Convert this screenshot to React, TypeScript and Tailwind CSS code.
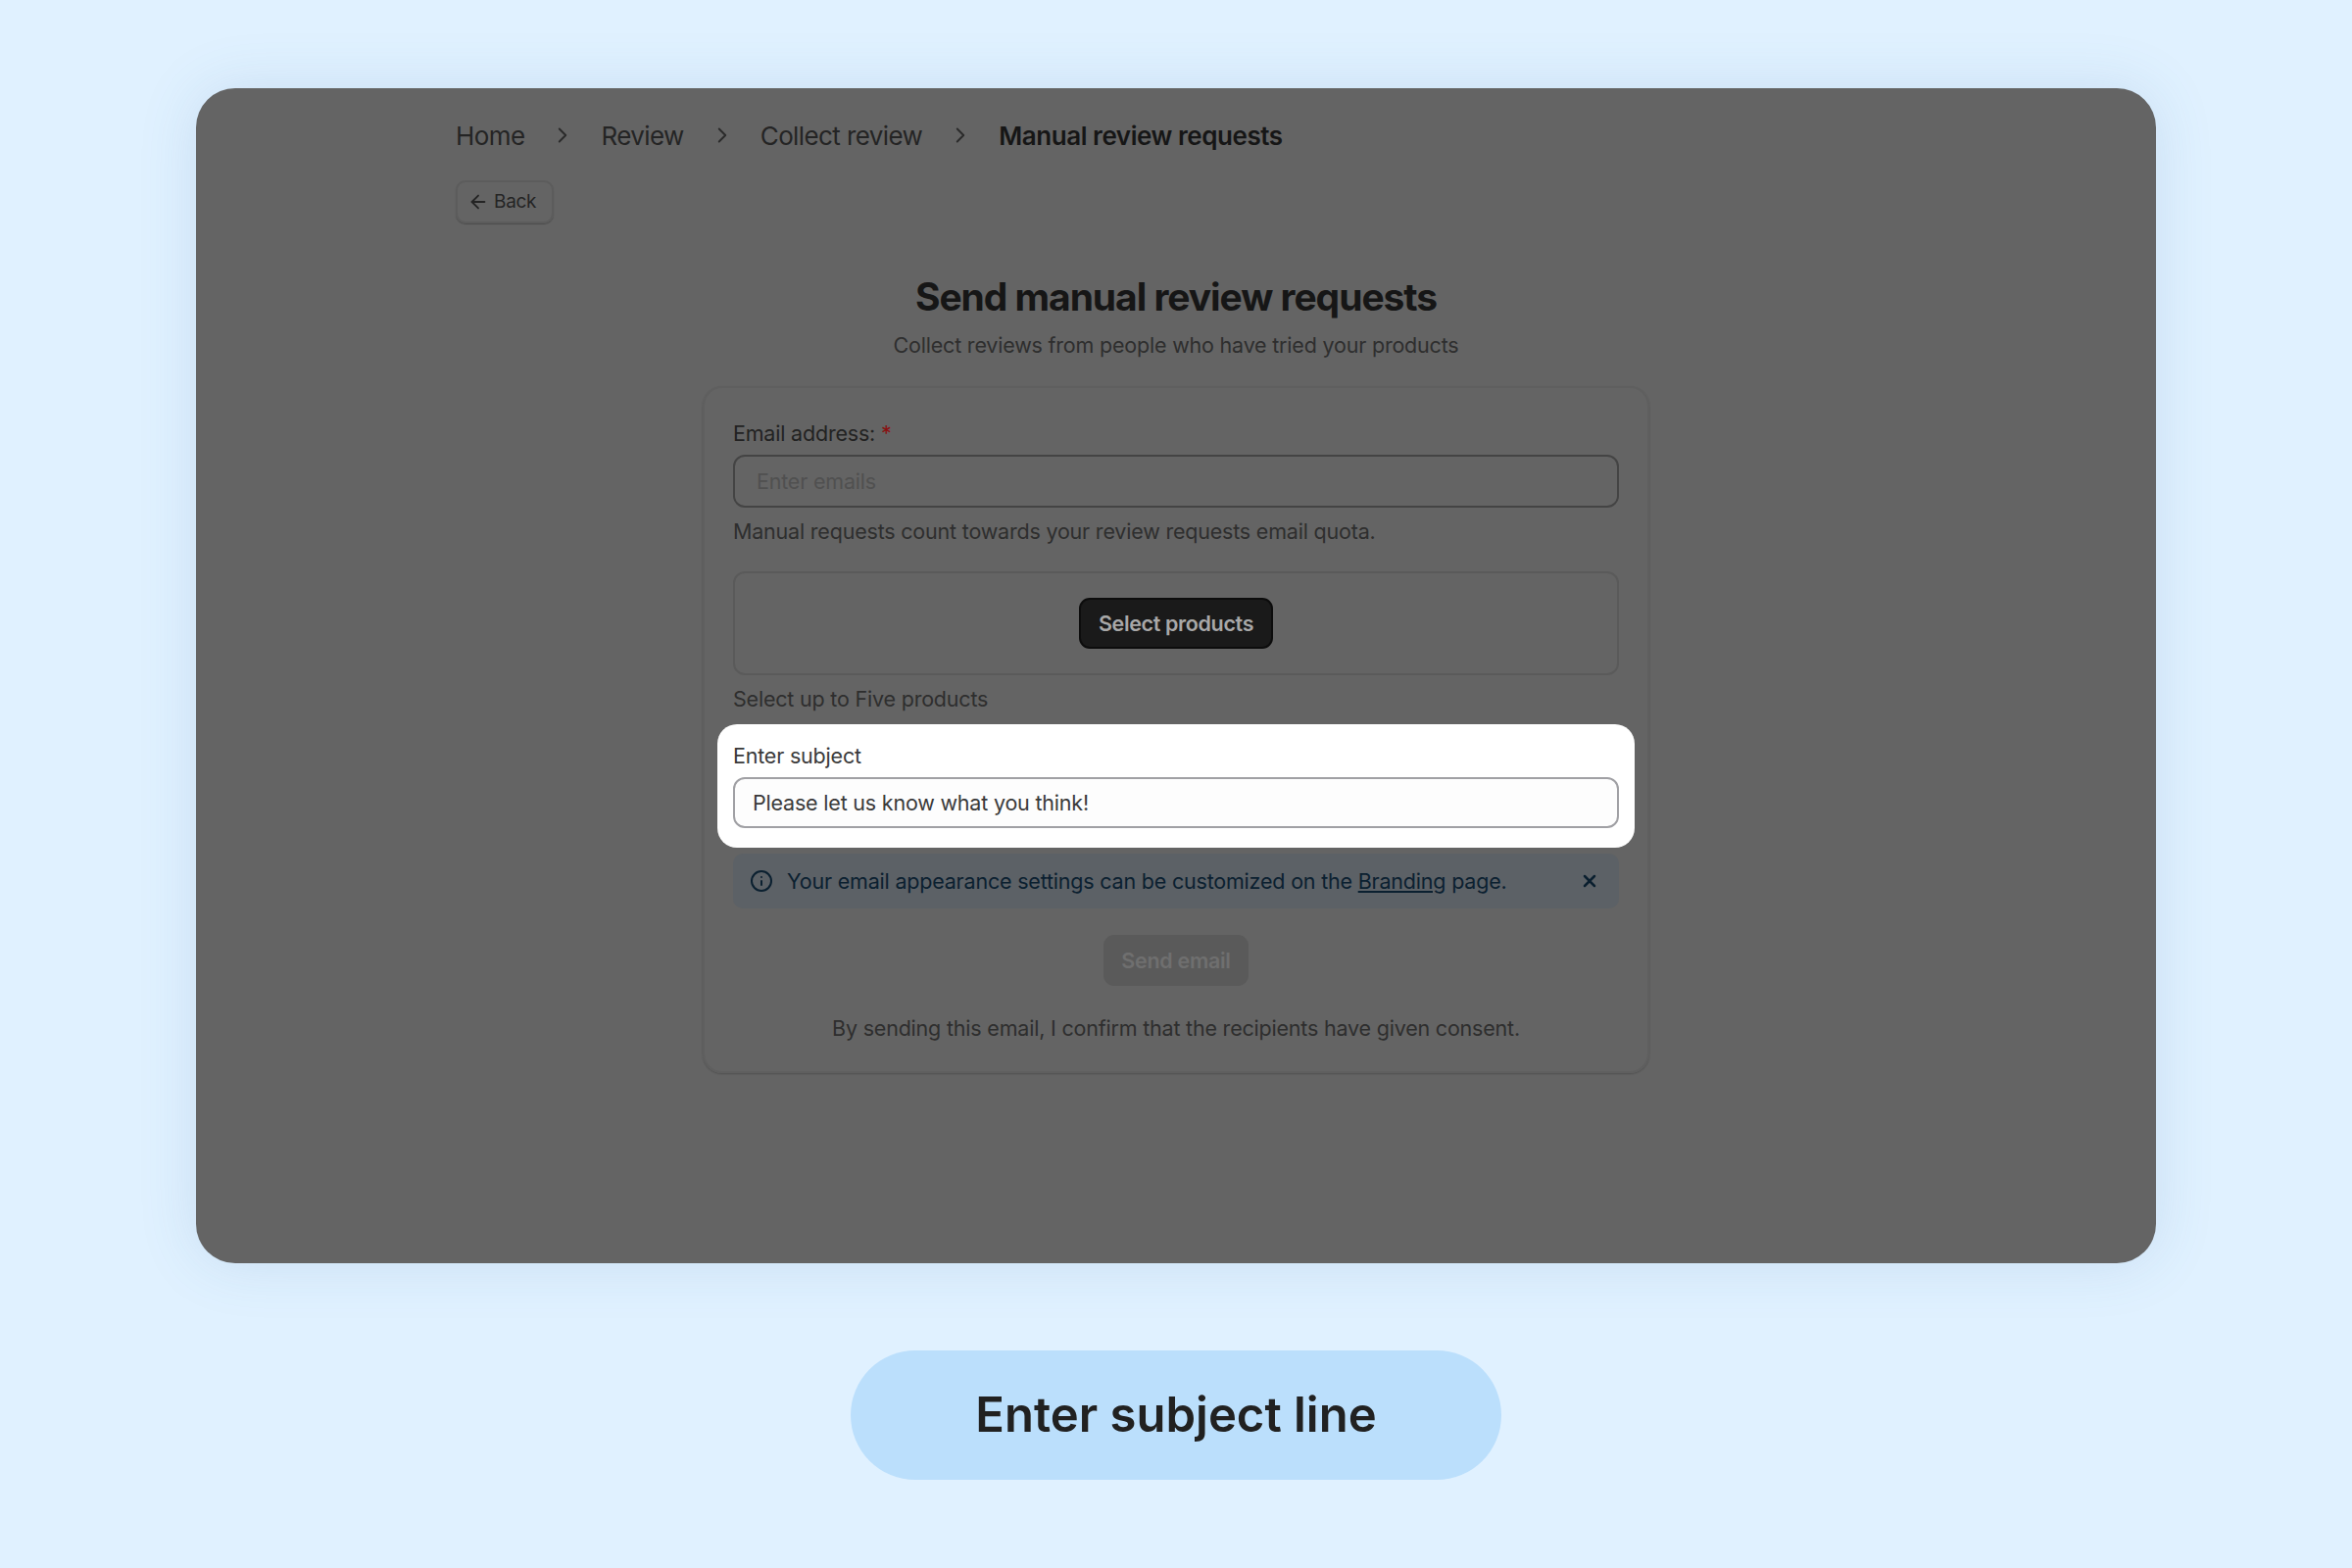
import { ArrowLeft, ChevronRight, Info, X } from 'lucide-react';

const crumbs = ['Home', 'Review', 'Collect review'];

function Breadcrumbs() {
  return (
    <div className="flex items-center h-[32px] text-[26px] tracking-[-0.6px] text-[#242424]">
      {crumbs.map((c) => (
        <div key={c} className="flex items-center">
          <span>{c}</span>
          <ChevronRight className="mx-[26px] w-[26px] h-[26px] text-[#2a2a2a]" strokeWidth={1.75} />
        </div>
      ))}
      <span className="font-semibold tracking-[-0.45px] text-[#161616]">Manual review requests</span>
    </div>
  );
}

function Card() {
  return (
    <div className="mx-auto mt-[29px] w-[966px] h-[701px] rounded-[20px] border-2 border-[#5f5f5f] px-[29px] pt-[33px] text-[21.5px] tracking-[-0.2px] text-[#2e2e2e] shadow-[0_1px_2px_rgba(0,0,0,0.2)]">
      <div className="h-[26px] leading-[26px] text-[#222]">
        Email address: <span className="text-[#8a1010]">*</span>
      </div>
      <div className="mt-[9px] h-[54px] rounded-[12px] border-2 border-[#444] pl-[22px] flex items-center text-[#505050]">
        Enter emails
      </div>
      <div className="mt-[11px] h-[26px] leading-[26px]">
        Manual requests count towards your review requests email quota.
      </div>
      <div className="mt-[28px] h-[106px] rounded-[12px] border-2 border-[#5a5a5a] flex items-center justify-center">
        <button className="h-[52px] w-[198px] rounded-[11px] bg-[#1a1a1a] border-2 border-[#0c0c0c] text-[#a8a8a8] font-semibold text-[21.5px] tracking-[-0.35px]">
          Select products
        </button>
      </div>
      <div className="mt-[11px] h-[26px] leading-[26px]">Select up to Five products</div>
      <div className="mt-[13px] -mx-[16px] h-[126px] rounded-[20px] bg-white px-[16px] pt-[19px]">
        <div className="h-[26px] leading-[26px] text-[#3a3a3a]">Enter subject</div>
        <div className="mt-[9px] h-[52px] rounded-[12px] border-2 border-[#a0a0a4] bg-[#fdfdfd] pl-[18px] flex items-center text-[#3a3a3a]">
          Please let us know what you think!
        </div>
      </div>
      <div className="mt-[6px] h-[56px] rounded-[10px] bg-[#5c6166] flex items-center pl-[17px] pr-[20px] text-[#0b2030]">
        <Info className="w-[24px] h-[24px] shrink-0" strokeWidth={2} />
        <span className="ml-[14px]">
          Your email appearance settings can be customized on the <span className="underline">Branding</span> page.
        </span>
        <X className="ml-auto w-[20px] h-[20px] shrink-0" strokeWidth={3} />
      </div>
      <div className="mt-[27px] flex justify-center">
        <button className="h-[52px] w-[148px] rounded-[11px] bg-[#5a5a5a] text-[#6f6f6f] font-semibold text-[21.5px] tracking-[-0.3px]">
          Send email
        </button>
      </div>
      <div className="mt-[30px] h-[26px] leading-[26px] text-center">
        By sending this email, I confirm that the recipients have given consent.
      </div>
    </div>
  );
}

export default function App() {
  return (
    <div className="min-h-[1600px] bg-[#e0f1ff] pt-[90px] font-['Inter',sans-serif]">
      <div className="mx-auto w-[2000px] h-[1199px] rounded-[40px] bg-[#646464] pt-[32px] shadow-[0_0_60px_rgba(70,120,170,0.15)]">
        <div className="pl-[265px]">
          <Breadcrumbs />
          <button className="mt-[30px] h-[44px] w-[100px] rounded-[10px] border-2 border-[#5c5c5c] flex items-center pl-[10px] gap-[5px] text-[19px] tracking-[-0.3px] text-[#242424] shadow-[0_1px_1px_rgba(0,0,0,0.25)]">
            <ArrowLeft className="w-[22px] h-[22px]" strokeWidth={2} />
            Back
          </button>
        </div>
        <h1 className="mt-[52px] text-center text-[39px] leading-[46px] font-bold tracking-[-1.05px] text-[#161616]">
          Send manual review requests
        </h1>
        <p className="mt-[13px] text-center text-[21.5px] leading-[26px] tracking-[-0.2px] text-[#2e2e2e]">
          Collect reviews from people who have tried your products
        </p>
        <Card />
      </div>
      <div className="mx-auto mt-[89px] w-[664px] h-[132px] rounded-full bg-[#bbdffc] flex items-center justify-center text-[49px] font-semibold text-[#212121]">
        Enter subject line
      </div>
    </div>
  );
}
